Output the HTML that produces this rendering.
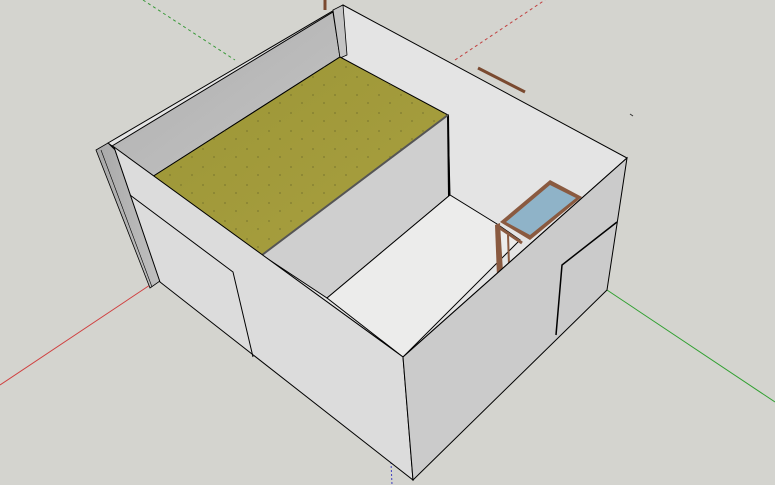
<!DOCTYPE html>
<html><head><meta charset="utf-8"><style>
html,body{margin:0;padding:0;background:#d4d4cf;}
svg{display:block}
</style></head><body>
<svg width="775" height="485" viewBox="0 0 775 485" xmlns="http://www.w3.org/2000/svg">
<defs>
<linearGradient id="gw" x1="0" y1="0" x2="1" y2="1"><stop offset="0" stop-color="#aeaeae"/><stop offset="1" stop-color="#c4c4c4"/></linearGradient>
<linearGradient id="yf" x1="0" y1="0" x2="1" y2="1"><stop offset="0" stop-color="#9c9636"/><stop offset="1" stop-color="#a89f40"/></linearGradient>
<linearGradient id="pg" x1="0" y1="0" x2="1" y2="0"><stop offset="0" stop-color="#a8a8a8"/><stop offset="1" stop-color="#c0c0c0"/></linearGradient>
<pattern id="dots" width="22" height="18" patternUnits="userSpaceOnUse"><circle cx="5" cy="5" r="1" fill="#6d6a2a"/><circle cx="16" cy="13" r="1" fill="#6d6a2a"/></pattern>
</defs>
<rect width="775" height="485" fill="#d4d4cf"/>
<line x1="143" y1="0" x2="235" y2="60" stroke="#3a9a3a" stroke-dasharray="3,3" stroke-width="1"/>
<line x1="455" y1="60" x2="545" y2="0" stroke="#c04040" stroke-dasharray="3,3" stroke-width="1"/>
<line x1="0" y1="385" x2="150" y2="285" stroke="#d04040" stroke-width="1"/>
<line x1="607" y1="290" x2="775" y2="402" stroke="#30a030" stroke-width="1"/>
<line x1="391" y1="462" x2="392" y2="485" stroke="#4040c0" stroke-dasharray="2,2" stroke-width="1"/>
<polygon points="108,143 343,5 627,158 403,357" fill="#e4e4e4" stroke="#000" stroke-width="1"/>
<line x1="478" y1="68" x2="525" y2="92" stroke="#7a4a30" stroke-width="3"/>
<line x1="325" y1="0" x2="325" y2="10" stroke="#7a4a30" stroke-width="3"/>
<line x1="630" y1="114" x2="633" y2="116" stroke="#333" stroke-width="1"/>
<polygon points="112,146 333,12 340,57 152,177" fill="url(#gw)" stroke="#000" stroke-width="1"/>
<polygon points="333,10 343,5 347,55 340,58" fill="#c4c4c4" stroke="#000" stroke-width="0.8"/>
<polygon points="152,177 340,57 448,115 262,255" fill="url(#yf)" stroke="#000" stroke-width="1"/>
<polygon points="152,177 340,57 448,115 262,255" fill="url(#dots)" opacity="0.5"/>
<polygon points="262,255 448,115 450,195 327,298" fill="#cfcfcf" stroke="#000" stroke-width="1"/>
<line x1="448" y1="115" x2="449" y2="196" stroke="#000" stroke-width="2"/>
<line x1="262" y1="255" x2="448" y2="115" stroke="#555" stroke-width="2"/>
<polygon points="327,298 450,195 497,224 520,240 403,357" fill="#ececeb" stroke="#000" stroke-width="1"/>
<polygon points="495,225 500,223 503,272 497,277" fill="#8a5a40"/>
<line x1="497" y1="226" x2="522" y2="243" stroke="#8a5a40" stroke-width="3"/>
<line x1="508" y1="235" x2="509" y2="265" stroke="#8a5a40" stroke-width="2"/>
<polygon points="500,222 550,180 582,197 530,240" fill="#8a5a40"/>
<polygon points="506,222 550,185 576,198 530,235" fill="#8fb3c8"/>
<line x1="403" y1="357" x2="627" y2="158" stroke="#000" stroke-width="1"/>
<!-- left column -->
<polygon points="96,150 108,143 115,150 160,281 150,288" fill="url(#pg)" stroke="#000" stroke-width="0.8"/>
<line x1="101" y1="150" x2="152" y2="287" stroke="#000" stroke-width="0.6"/>
<polygon points="114,147 403,357 413,480 160,282" fill="#dcdcdc" stroke="#000" stroke-width="1"/>
<polyline points="130,195 233,272 253,357" fill="none" stroke="#000" stroke-width="1"/>
<polygon points="403,357 627,158 607,290 413,480" fill="#cbcbcb" stroke="#000" stroke-width="1"/>
<polyline points="617,222 562,265 556,335" fill="none" stroke="#000" stroke-width="1.5"/>
</svg>
</body></html>
